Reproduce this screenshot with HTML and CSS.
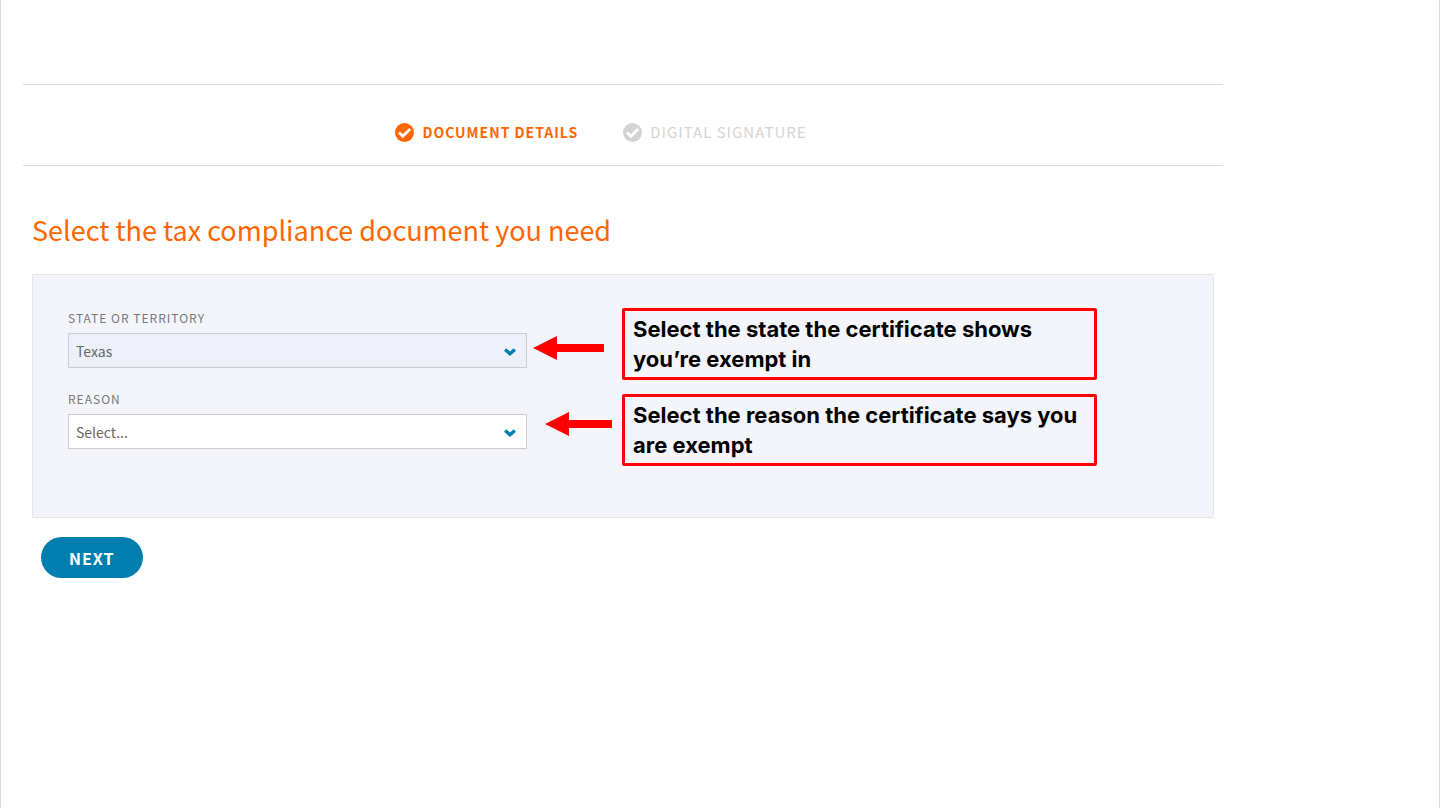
FILE: index.html
```html
<!DOCTYPE html>
<html lang="en">
<head>
    <meta charset="UTF-8">
    <meta name="viewport" content="width=device-width, initial-scale=1.0">
    <title>Tax Compliance Document</title>
    <link rel="stylesheet" href="styles.css">
</head>
<body>
    <main class="container">
        <ol class="steps">
            <li class="step active">
                <svg class="step-icon" viewBox="0 0 20 20" aria-hidden="true">
                    <circle cx="10" cy="10" r="10" fill="currentColor"/>
                    <path d="M4.2 10L8.2 13.9L15.9 6.4" fill="none" stroke="#fff" stroke-width="3"/>
                </svg>
                <span>DOCUMENT DETAILS</span>
            </li>
            <li class="step">
                <svg class="step-icon" viewBox="0 0 20 20" aria-hidden="true">
                    <circle cx="10" cy="10" r="10" fill="currentColor"/>
                    <path d="M4.2 10L8.2 13.9L15.9 6.4" fill="none" stroke="#fff" stroke-width="3"/>
                </svg>
                <span>DIGITAL SIGNATURE</span>
            </li>
        </ol>

        <form class="document-form">
            <h1>Select the tax compliance document you need</h1>

            <div class="panel">
                <div class="fields">
                    <div class="field">
                        <label for="state">STATE OR TERRITORY</label>
                        <div class="select-box">
                            <select id="state" class="filled">
                                <option>Texas</option>
                            </select>
                            <svg class="chevron" viewBox="0 0 12 8" aria-hidden="true">
                                <path d="M0 2.8L2.3 0.3L6 3.4L9.7 0.3L12 2.8L6 7.9Z" fill="#007faf"/>
                            </svg>
                        </div>
                    </div>
                    <div class="field">
                        <label for="reason">REASON</label>
                        <div class="select-box">
                            <select id="reason">
                                <option>Select...</option>
                            </select>
                            <svg class="chevron" viewBox="0 0 12 8" aria-hidden="true">
                                <path d="M0 2.8L2.3 0.3L6 3.4L9.7 0.3L12 2.8L6 7.9Z" fill="#007faf"/>
                            </svg>
                        </div>
                    </div>
                </div>

                <div class="hints">
                    <div class="hint">
                        <svg class="arrow" viewBox="0 0 89 72" aria-hidden="true">
                            <path d="M0 40L24 28V36H71V44H24V52Z" fill="#f00"/>
                        </svg>
                        <p>Select the state the certificate shows you’re exempt in</p>
                    </div>
                    <div class="hint">
                        <svg class="arrow" viewBox="0 0 89 72" aria-hidden="true">
                            <path d="M12 30L36 18V26H79V34H36V42Z" fill="#f00"/>
                        </svg>
                        <p>Select the reason the certificate says you are exempt</p>
                    </div>
                </div>
            </div>

            <button type="submit">NEXT</button>
        </form>
    </main>
</body>
</html>
```
FILE: styles.css
```css
* {
    box-sizing: border-box;
}

body {
    font-family: "Noto Sans CJK SC", "Open Sans", sans-serif;
    background-color: #fff;
    min-height: 100vh;
    margin: 0;
    border-left: 1px solid #d8d8d8;
    border-right: 1px solid #d8d8d8;
    padding: 84px 22px 40px;
}

.container {
    max-width: 1200px;
}

.steps {
    display: flex;
    justify-content: center;
    gap: 45px;
    margin: 0;
    padding: 35px 44px 21px 0;
    border-top: 1px solid #dcdcdc;
    border-bottom: 1px solid #dcdcdc;
    list-style: none;
}

.step {
    display: flex;
    align-items: center;
    gap: 8px;
    color: #d4d4d4;
    font-size: 15px;
    line-height: 24px;
    letter-spacing: 1px;
}

.step.active {
    color: #ff6600;
    font-size: 14px;
    font-weight: bold;
}

.step-icon {
    width: 19px;
    height: 19px;
}

.document-form {
    padding: 44px 9px 0;
}

h1 {
    margin: 0 0 24px;
    color: #ff6600;
    font-size: 27px;
    font-weight: normal;
    line-height: 40px;
}

.panel {
    display: flex;
    padding: 33px 35px 51px;
    background-color: #f4f5fa;
    border: 1px solid #e6e7e9;
}

.fields {
    flex: 0 1 459px;
}

.field {
    margin-bottom: 21px;
}

.field:last-child {
    margin-bottom: 0;
}

.field label {
    display: block;
    margin-bottom: 5px;
    color: #77787b;
    font-size: 12px;
    line-height: 20px;
    letter-spacing: 1px;
}

.select-box {
    position: relative;
}

.select-box select {
    display: block;
    width: 100%;
    height: 35px;
    padding: 0 30px 0 7px;
    appearance: none;
    background-color: #fff;
    border: 1px solid #ccc;
    border-radius: 0;
    color: #666;
    font-family: inherit;
    font-size: 14px;
}

.select-box select.filled {
    background-color: #edf0f9;
}

.chevron {
    position: absolute;
    top: 15px;
    right: 11px;
    width: 12px;
    height: 8px;
    pointer-events: none;
}

.hints {
    display: flex;
    flex: 0 1 564px;
    flex-direction: column;
    gap: 14px;
    margin-left: 6px;
}

.hint {
    display: flex;
}

.arrow {
    flex: none;
    width: 89px;
    height: 72px;
}

.hint p {
    flex: 1;
    margin: 0;
    padding: 3px 8px;
    border: 3px solid #f00;
    border-radius: 2px;
    color: #000;
    font-family: Inter, "Liberation Sans", sans-serif;
    font-size: 22px;
    font-weight: bold;
    line-height: 30px;
}

button {
    display: block;
    height: 41px;
    margin: 19px 0 0 9px;
    padding: 0 28px;
    background-color: #007faf;
    border: none;
    border-radius: 21px;
    color: #fff;
    font-family: inherit;
    font-size: 16px;
    font-weight: bold;
    letter-spacing: 1px;
    cursor: pointer;
}

button:hover {
    background-color: #006a93;
}
```
